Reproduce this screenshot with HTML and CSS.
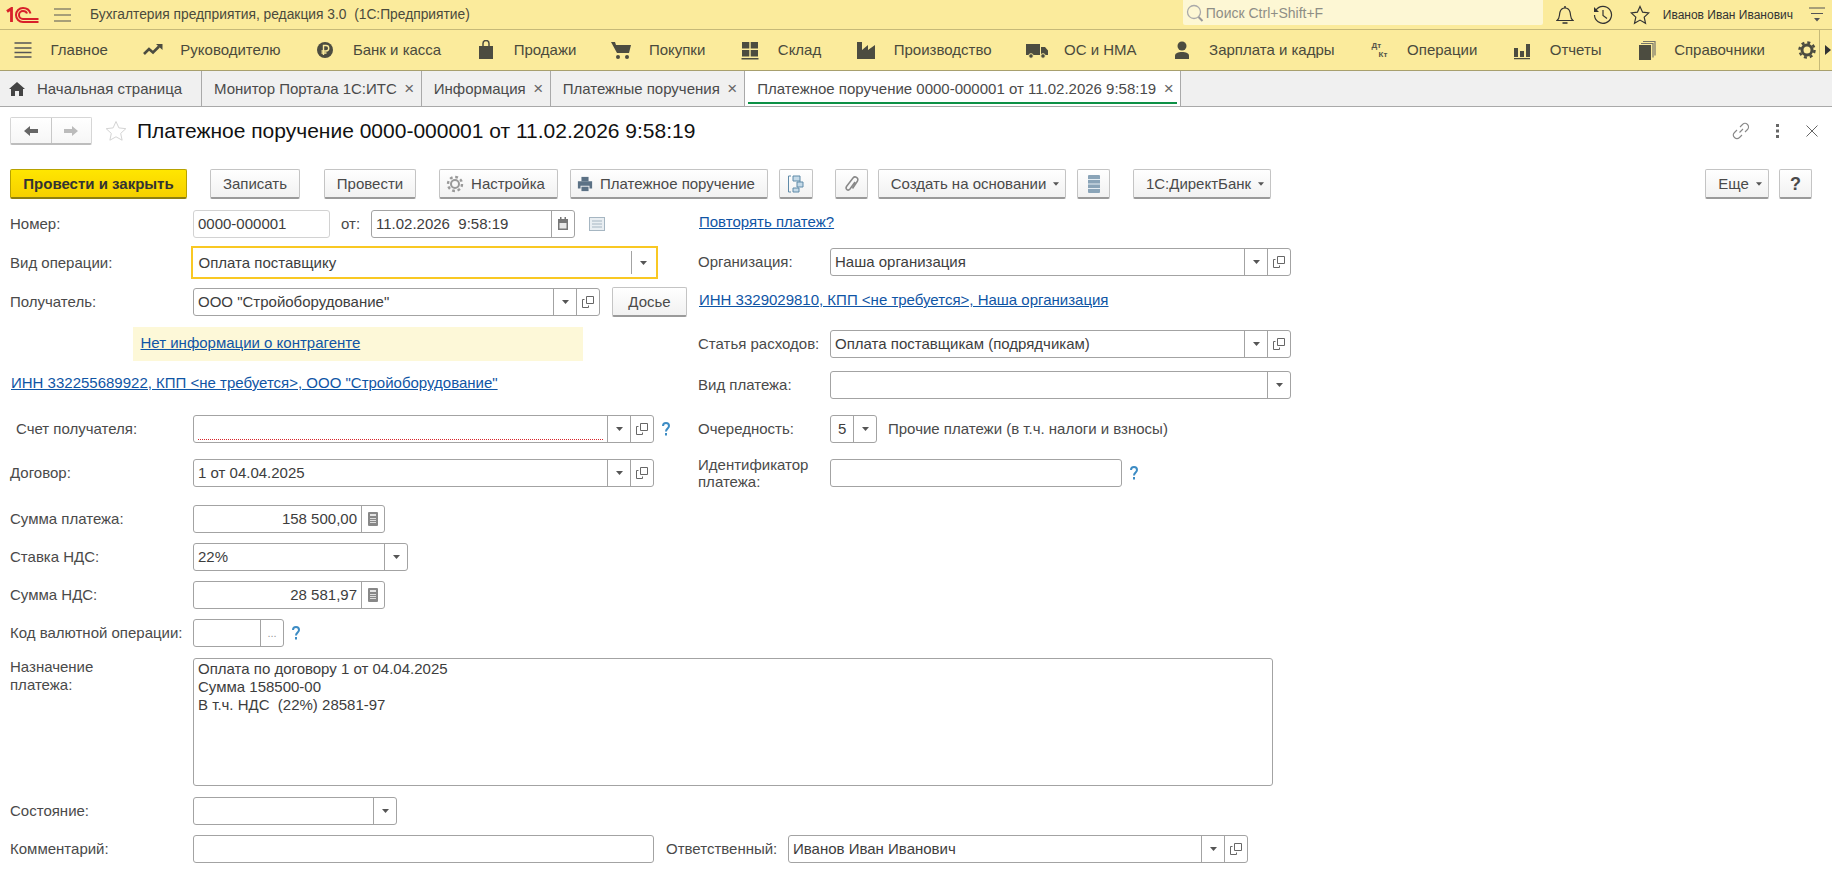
FILE: index.html
```html
<!DOCTYPE html>
<html lang="ru">
<head>
<meta charset="utf-8">
<title>Платежное поручение</title>
<link rel="stylesheet" href="styles.css">
</head>
<body>

<svg class="defs" xmlns="http://www.w3.org/2000/svg">
  <symbol id="i-caret" viewBox="0 0 7 4"><path d="M0 0h7L3.500 4z" fill="#555"/></symbol>
  <symbol id="i-copy" viewBox="0 0 12 12"><path d="M4.500.5h7v7h-7zM2.500 3.500h-2v8h6v-2" fill="none" stroke="#666"/></symbol>
  <symbol id="i-calc" viewBox="0 0 10 14"><rect width="10" height="14" rx="1" fill="#888"/><rect x="2" y="2" width="6" height="2" fill="#e4e4e4"/><path d="M2 6h6v1H2zM2 8h6v1H2zM2 10h6v1H2z" fill="#ddd"/></symbol>
  <symbol id="i-help" viewBox="0 0 8 14"><path d="M1 4c0-4 6-4 6 0 0 2.500-3 2.500-3 5.500" fill="none" stroke="#3d8cc4" stroke-width="2"/><rect x="3" y="11" width="2" height="2.500" fill="#3d8cc4"/></symbol>
</svg>

<div class="topbar">
  <svg class="logo" viewBox="0 0 33 16" width="33" height="16">
    <path d="M1 4.500L5.500 1.500V15" fill="none" stroke="#d8202a" stroke-width="2.800"/>
    <path d="M21 6.500c-.5-1.500-2-2.500-4-2.500a4 4 0 0 0 0 8h15.500" fill="none" stroke="#d8202a" stroke-width="2"/>
    <path d="M24.500 6.500C23.500 3 20.500 1 17 1a7 7 0 0 0 0 14h15.500" fill="none" stroke="#d8202a" stroke-width="2"/>
  </svg>
  <svg class="top-burger" viewBox="0 0 17 14" width="17" height="14"><path d="M0 1h17M0 7h17M0 13h17" stroke="#555" stroke-width="1.200"/></svg>
  <span class="app-title">Бухгалтерия предприятия, редакция 3.0&nbsp; (1С:Предприятие)</span>
  <div class="search">
    <svg viewBox="0 0 18 18" width="18" height="18"><circle cx="8" cy="8" r="6.500" fill="none" stroke="#aaa" stroke-width="1.300"/><path d="M12.500 13l4 4" stroke="#999" stroke-width="2"/></svg>
    <span>Поиск Ctrl+Shift+F</span>
  </div>
  <svg class="top-icon bell" viewBox="0 0 18 20" width="18" height="20"><path d="M1 15.500h16c-3-2-2-5-3-8.500-.7-2.500-2.500-4-5-4S4.700 4.500 4 7c-1 3.500 0 6.500-3 8.500z" fill="none" stroke="#333" stroke-width="1.200"/><path d="M9 1v2M6.500 18h5" stroke="#333" stroke-width="1.500"/></svg>
  <svg class="top-icon history" viewBox="0 0 20 20" width="20" height="20"><path d="M3 5a8.500 8.500 0 1 1-1.500 5" fill="none" stroke="#333" stroke-width="1.200"/><path d="M1 2v5h5z" fill="#333"/><path d="M10 5v5.500l4 3" fill="none" stroke="#333" stroke-width="1.200"/></svg>
  <svg class="top-icon star-top" viewBox="0 0 20 20" width="20" height="20"><path d="M10 1.500l2.600 5.700 6.200.7-4.600 4.200 1.300 6.100-5.500-3.100-5.500 3.100 1.300-6.100L1.200 7.900l6.200-.7z" fill="none" stroke="#333" stroke-width="1.200"/></svg>
  <span class="user">Иванов Иван Иванович</span>
  <svg class="top-menu" viewBox="0 0 16 15" width="16" height="15"><path d="M0 1h16M2 6.500h12" stroke="#555" stroke-width="1.200"/><path d="M5 11h6l-3 3.500z" fill="#555"/></svg>
</div>

<div class="sections">
  <a class="sec"><svg viewBox="0 0 24 20" width="24" height="20"><path d="M3.500 3h17M3.500 8h17M3.500 12.500h17M3.500 17h17" stroke="#555" stroke-width="1.300"/></svg><span>Главное</span></a>
  <a class="sec"><svg viewBox="0 0 24 20" width="24" height="20"><path d="M3 14l5-5 4 3.500 6-6" fill="none" stroke="#4c4c40" stroke-width="2.600"/><path d="M15 4h6.500v6z" fill="#4c4c40"/></svg><span>Руководителю</span></a>
  <a class="sec"><svg viewBox="0 0 24 20" width="24" height="20"><circle cx="12" cy="10" r="8" fill="#4c4c40"/><path d="M10.500 15V5.500h2.500a2.600 2.600 0 0 1 0 5.500H8.500M8.500 13h5" fill="none" stroke="#fbeb9c" stroke-width="1.400"/></svg><span>Банк и касса</span></a>
  <a class="sec"><svg viewBox="0 0 24 20" width="24" height="20"><path d="M5 6h14v13H5z" fill="#4c4c40"/><path d="M9 8V3.500a3 3 0 0 1 6 0V8" fill="none" stroke="#4c4c40" stroke-width="1.500"/></svg><span>Продажи</span></a>
  <a class="sec"><svg viewBox="0 0 24 20" width="24" height="20"><path d="M2 2h4l1 3h15l-2 8H8z" fill="#4c4c40"/><circle cx="9" cy="17" r="2" fill="#4c4c40"/><circle cx="18" cy="17" r="2" fill="#4c4c40"/></svg><span>Покупки</span></a>
  <a class="sec"><svg viewBox="0 0 24 20" width="24" height="20"><path d="M4 2h7.300v6.500H4zM12.700 2H20v6.500h-7.300zM4 10h7.300v6.500H4zM12.700 10H20v6.500h-7.300zM3.500 18H20.500v1.500H3.500z" fill="#4c4c40"/></svg><span>Склад</span></a>
  <a class="sec"><svg viewBox="0 0 24 20" width="24" height="20"><path d="M3 19V2h5v8l6-5v5l7-5v14z" fill="#4c4c40"/></svg><span>Производство</span></a>
  <a class="sec"><svg viewBox="0 0 24 20" width="24" height="20"><path d="M1 4h14v11H1zM16 7h4l3 3.500V15h-7z" fill="#4c4c40"/><circle cx="6" cy="16" r="2.300" fill="#4c4c40" stroke="#fbeb9c"/><circle cx="18" cy="16" r="2.300" fill="#4c4c40" stroke="#fbeb9c"/></svg><span>ОС и НМА</span></a>
  <a class="sec"><svg viewBox="0 0 24 20" width="24" height="20"><circle cx="12" cy="6" r="4.500" fill="#4c4c40"/><path d="M5 19v-3c0-3 3-4 7-4s7 1 7 4v3z" fill="#4c4c40"/></svg><span>Зарплата и кадры</span></a>
  <a class="sec"><span class="dtkt"><b>Дт</b><b>Кт</b></span><span>Операции</span></a>
  <a class="sec"><svg viewBox="0 0 24 20" width="24" height="20"><path d="M4 8h4v9H4zM10 11h4v6h-4zM16 4h4v13h-4zM4 18h16v1.200H4z" fill="#4c4c40"/></svg><span>Отчеты</span></a>
  <a class="sec"><svg viewBox="0 0 24 20" width="24" height="20"><path d="M4 5h12v15H4z" fill="#4c4c40"/><path d="M6 3.500h12v14M8 1.500h12v14" fill="none" stroke="#77766a" stroke-width="1.200"/></svg><span>Справочники</span></a>
  <svg class="sec-gear" viewBox="0 0 18 18" width="18" height="18"><circle cx="9" cy="9" r="5" fill="none" stroke="#4c4c40" stroke-width="3"/><circle cx="9" cy="9" r="7.500" fill="none" stroke="#4c4c40" stroke-width="2.500" stroke-dasharray="3 2.900"/></svg>
  <div class="sec-more"><svg viewBox="0 0 6 10" width="6" height="10"><path d="M0 0l6 5-6 5z" fill="#333"/></svg></div>
</div>

<div class="tabs">
  <div class="tab tab-home">
    <svg viewBox="0 0 16 14" width="16" height="14"><path d="M8 0l8 7h-2v7h-4V9H6v5H2V7H0z" fill="#444"/></svg>
    <span>Начальная страница</span>
  </div>
  <div class="tab"><span>Монитор Портала 1С:ИТС</span><i class="tab-x">×</i></div>
  <div class="tab"><span>Информация</span><i class="tab-x">×</i></div>
  <div class="tab"><span>Платежные поручения</span><i class="tab-x">×</i></div>
  <div class="tab tab-active"><span>Платежное поручение 0000-000001 от 11.02.2026 9:58:19</span><i class="tab-x">×</i></div>
</div>

<div class="head">
  <div class="nav">
    <div class="nav-btn"><svg viewBox="0 0 14 10" width="14" height="10"><path d="M0 5l6-5v3h8v4H6v3z" fill="#666"/></svg></div>
    <div class="nav-btn"><svg viewBox="0 0 14 10" width="14" height="10"><path d="M14 5L8 0v3H0v4h8v3z" fill="#bbb"/></svg></div>
  </div>
  <svg class="head-star" viewBox="0 0 22 22" width="22" height="22"><path d="M11 1.500l2.900 6.400 6.900.8-5.100 4.700 1.400 6.800-6.100-3.400-6.100 3.400 1.400-6.800L1.200 8.700l6.900-.8z" fill="none" stroke="#d4d4d4"/></svg>
  <h1>Платежное поручение 0000-000001 от 11.02.2026 9:58:19</h1>
  <div class="head-tools">
    <svg viewBox="0 0 18 18" width="18" height="18"><path d="M7.500 10.500l3.500-3.500M8 5l2.500-2.500a3.300 3.300 0 0 1 5 5L13 10M10 13l-2.500 2.500a3.300 3.300 0 0 1-5-5L5 8" fill="none" stroke="#888" stroke-width="1.100"/></svg>
    <svg viewBox="0 0 4 14" width="4" height="14"><path d="M0 0h3v3H0zM0 5.500h3v3H0zM0 11h3v3H0z" fill="#666"/></svg>
    <svg viewBox="0 0 12 12" width="12" height="12"><path d="M.5.500l11 11M11.500.500l-11 11" stroke="#666"/></svg>
  </div>
</div>

<div class="toolbar">
  <button class="btn btn-primary w177">Провести и закрыть</button>
  <button class="btn w90 ml23">Записать</button>
  <button class="btn w92 ml24">Провести</button>
  <button class="btn btn-lead w119 ml23"><svg class="btn-ico" viewBox="0 0 18 18" width="18" height="18"><circle cx="9" cy="9" r="4" fill="none" stroke="#999" stroke-width="2"/><circle cx="9" cy="9" r="7" fill="none" stroke="#999" stroke-width="2.400" stroke-dasharray="2.800 2.700"/></svg>Настройка</button>
  <button class="btn btn-lead w198 ml12"><svg class="btn-ico" viewBox="0 0 18 18" width="16" height="16"><path d="M5 1h8v5H5z" fill="#5b7185"/><path d="M1 6h16v8h-3v-3H4v3H1z" fill="#5b7185"/><path d="M5 12h8v5H5z" fill="#5b7185"/></svg>Платежное поручение</button>
  <button class="btn w34 ml11"><svg viewBox="0 0 18 20" width="18" height="20"><path d="M6 2h7v5H6zM10 8h6v5h-6zM6 14h6v4H6z" fill="#c5dae8" stroke="#5f8aa8"/><path d="M4 2H1.500v16H4M13 7v1" fill="none" stroke="#5f8aa8"/></svg></button>
  <button class="btn w33 ml22"><svg viewBox="0 0 16 18" width="16" height="18"><path d="M11 7l-5 7c-2 2.500-5 0-3.500-2.500L9 3c2-2.500 6 0 4.500 3l-5 7.500" fill="none" stroke="#888" stroke-width="1.500"/></svg></button>
  <button class="btn btn-drop w188 ml10">Создать на основании<svg class="btn-caret"><use href="#i-caret"/></svg></button>
  <button class="btn w33 ml11"><svg viewBox="0 0 14 18" width="14" height="18"><rect width="12" height="18" x="1" rx="1" fill="#8aa4b8"/><path d="M1 4.500h12M1 9h12M1 13.500h12" stroke="#e4edf3"/></svg></button>
  <button class="btn btn-drop w138 ml23">1С:ДиректБанк<svg class="btn-caret"><use href="#i-caret"/></svg></button>
  <button class="btn btn-drop w64 push">Еще<svg class="btn-caret"><use href="#i-caret"/></svg></button>
  <button class="btn btn-help w33 ml10">?</button>
</div>

<div class="form">
  <div class="columns">
    <div class="col-left">
      <div class="row">
        <label>Номер:</label>
        <div class="field field-light w137"><div class="val">0000-000001</div></div>
        <label class="lbl-from">от:</label>
        <div class="field w204"><div class="val">11.02.2026&nbsp; 9:58:19</div>
          <div class="fbtn"><svg viewBox="0 0 12 14" width="12" height="14"><path d="M1 2h10v11H1z" fill="#777"/><path d="M3 0h1.500v3H3zM7.500 0H9v3H7.500z" fill="#777"/><path d="M2.500 6h7v5.500h-7z" fill="#e8e8e8"/></svg></div>
        </div>
        <svg class="doc-ico" viewBox="0 0 16 14" width="16" height="14"><rect x=".5" y=".5" width="15" height="13" fill="#e9eef2" stroke="#a6b6c2"/><path d="M3 4h10M3 7h10M3 10h10" stroke="#a6b6c2"/></svg>
      </div>
      <div class="row row-focus mt8">
        <label class="lbl-focus">Вид операции:</label>
        <div class="field field-focus"><div class="val">Оплата поставщику</div><div class="fbtn"><svg class="caret"><use href="#i-caret"/></svg></div></div>
      </div>
      <div class="row mt9">
        <label>Получатель:</label>
        <div class="field w407"><div class="val">ООО "Стройоборудование"</div><div class="fbtn"><svg class="caret"><use href="#i-caret"/></svg></div><div class="fbtn"><svg class="copy"><use href="#i-copy"/></svg></div></div>
        <button class="btn btn-dossier">Досье</button>
      </div>
      <div class="note"><a>Нет информации о контрагенте</a></div>
      <div class="link-row mt13"><a class="inn">ИНН 332255689922, КПП &lt;не требуется&gt;, ООО "Стройоборудование"</a></div>
      <div class="row mt23">
        <label class="lbl-indent">Счет получателя:</label>
        <div class="field w461"><div class="val val-error"></div><div class="fbtn"><svg class="caret"><use href="#i-caret"/></svg></div><div class="fbtn"><svg class="copy"><use href="#i-copy"/></svg></div></div>
        <svg class="help"><use href="#i-help"/></svg>
      </div>
      <div class="row mt16">
        <label>Договор:</label>
        <div class="field w461"><div class="val">1 от 04.04.2025</div><div class="fbtn"><svg class="caret"><use href="#i-caret"/></svg></div><div class="fbtn"><svg class="copy"><use href="#i-copy"/></svg></div></div>
      </div>
    </div>

    <div class="col-right">
      <div class="link-row"><a>Повторять платеж?</a></div>
      <div class="row mt17">
        <label class="lbl-r">Организация:</label>
        <div class="field w461"><div class="val">Наша организация</div><div class="fbtn"><svg class="caret"><use href="#i-caret"/></svg></div><div class="fbtn"><svg class="copy"><use href="#i-copy"/></svg></div></div>
      </div>
      <div class="link-row mt15"><a>ИНН 3329029810, КПП &lt;не требуется&gt;, Наша организация</a></div>
      <div class="row mt21">
        <label class="lbl-r">Статья расходов:</label>
        <div class="field w461"><div class="val">Оплата поставщикам (подрядчикам)</div><div class="fbtn"><svg class="caret"><use href="#i-caret"/></svg></div><div class="fbtn"><svg class="copy"><use href="#i-copy"/></svg></div></div>
      </div>
      <div class="row mt13">
        <label class="lbl-r">Вид платежа:</label>
        <div class="field w461"><div class="val"></div><div class="fbtn"><svg class="caret"><use href="#i-caret"/></svg></div></div>
      </div>
      <div class="row mt16">
        <label class="lbl-r">Очередность:</label>
        <div class="field w47"><div class="val val-one">5</div><div class="fbtn"><svg class="caret"><use href="#i-caret"/></svg></div></div>
        <span class="hint">Прочие платежи (в т.ч. налоги и взносы)</span>
      </div>
      <div class="row mt16">
        <label class="lbl-r lbl-two">Идентификатор<br>платежа:</label>
        <div class="field w292"><div class="val"></div></div>
        <svg class="help help-id"><use href="#i-help"/></svg>
      </div>
    </div>
  </div>

  <div class="row mt18">
    <label>Сумма платежа:</label>
    <div class="field w192"><div class="val val-num">158 500,00</div><div class="fbtn"><svg class="calc"><use href="#i-calc"/></svg></div></div>
  </div>
  <div class="row mt10">
    <label>Ставка НДС:</label>
    <div class="field w215"><div class="val">22%</div><div class="fbtn"><svg class="caret"><use href="#i-caret"/></svg></div></div>
  </div>
  <div class="row mt10">
    <label>Сумма НДС:</label>
    <div class="field w192"><div class="val val-num">28 581,97</div><div class="fbtn"><svg class="calc"><use href="#i-calc"/></svg></div></div>
  </div>
  <div class="row mt10">
    <label>Код валютной операции:</label>
    <div class="field w91"><div class="val"></div><div class="fbtn fbtn-dots">...</div></div>
    <svg class="help"><use href="#i-help"/></svg>
  </div>
  <div class="row row-text mt11">
    <label>Назначение<br>платежа:</label>
    <div class="textarea">Оплата по договору 1 от 04.04.2025<br>Сумма 158500-00<br>В т.ч. НДС&nbsp; (22%) 28581-97</div>
  </div>
  <div class="row mt11">
    <label>Состояние:</label>
    <div class="field w204"><div class="val"></div><div class="fbtn"><svg class="caret"><use href="#i-caret"/></svg></div></div>
  </div>
  <div class="row mt10">
    <label>Комментарий:</label>
    <div class="field w461"><div class="val"></div></div>
    <label class="lbl-resp">Ответственный:</label>
    <div class="field w460"><div class="val">Иванов Иван Иванович</div><div class="fbtn"><svg class="caret"><use href="#i-caret"/></svg></div><div class="fbtn"><svg class="copy"><use href="#i-copy"/></svg></div></div>
  </div>
</div>

</body>
</html>
```

FILE: styles.css
```css
*{
	margin:0;
	padding:0;
	box-sizing:border-box;
}
html,body{
	height:880px;
	overflow:hidden;
}
body{
	background:#fff;
	color:#4a4a4a;
	font:15px/18px "Liberation Sans",Arial,sans-serif;
}
.defs{
	display:none;
}
a{
	color:#0f55a5;
	text-decoration:underline;
}

/* top bar */
.topbar{
	display:flex;
	align-items:center;
	height:30px;
	padding-left:6px;
	background:#fbeb9c;
	border-bottom:1px solid #c6b978;
}
.logo{
	flex:none;
}
.top-burger{
	margin-left:15px;
}
.app-title{
	margin-left:19px;
	font-size:13.800px;
	color:#4a4a3c;
}
.search{
	display:flex;
	align-items:center;
	align-self:flex-start;
	width:360px;
	height:25px;
	margin-left:auto;
	padding-left:3px;
	background:#fdf7d4;
	border-radius:0 0 2px 2px;
	font-size:14px;
	color:#8e8e86;
}
.search span{
	margin-left:2px;
}
.top-icon{
	flex:none;
}
.bell{
	margin-left:13px;
}
.history{
	margin-left:19px;
}
.star-top{
	margin-left:17px;
}
.user{
	margin-left:13px;
	font-size:12px;
	color:#333;
}
.top-menu{
	margin:0 7px 0 16px;
}

/* sections */
.sections{
	display:flex;
	align-items:center;
	height:41px;
	padding-left:11px;
	background:#fbeb9c;
	border-bottom:1px solid #a8a06e;
}
.sec{
	display:flex;
	flex:none;
	align-items:center;
	margin-right:33px;
	color:#4a4a3c;
	text-decoration:none;
	white-space:nowrap;
}
.sec span:last-child{
	margin-left:15.500px;
}
.dtkt{
	display:flex;
	flex-direction:column;
	width:24px;
	font-size:8px;
	line-height:9px;
	color:#55554a;
	padding-left:4px;
}
.dtkt b+b{
	margin-left:7px;
}
.sec-gear{
	margin-left:auto;
	flex:none;
}
.sec-more{
	display:flex;
	align-items:center;
	align-self:stretch;
	width:16px;
	margin-left:3px;
	padding-left:5px;
	border-left:1px solid #c6b978;
}

/* tabs */
.tabs{
	display:flex;
	height:36px;
	background:#f0f0f0;
	border-bottom:1px solid #a9a9a9;
}
.tab{
	display:flex;
	align-items:center;
	height:35px;
	padding:0 5px 0 12px;
	border-right:1px solid #a9a9a9;
	color:#4a4a4a;
}
.tab-home{
	width:202px;
	padding-left:9px;
}
.tab-home span{
	margin-left:12px;
}
.tab-x{
	margin-left:6px;
	width:13px;
	font:17px/18px "Liberation Sans",sans-serif;
	font-style:normal;
	color:#666;
	text-align:center;
}
.tab-active{
	position:relative;
	padding-left:12.500px;
	background:#fff;
}
.tab-active:after{
	content:"";
	position:absolute;
	left:3px;
	right:3px;
	bottom:2px;
	height:2px;
	background:#0d9146;
}

/* header */
.head{
	display:flex;
	align-items:center;
	height:48px;
	padding:0 14px 0 10px;
	margin-top:0;
}
.nav{
	display:flex;
	width:82px;
	height:28px;
	border:1px solid #d6d6d6;
	border-bottom:2px solid #bdbdbd;
	border-radius:2px;
}
.nav-btn{
	display:flex;
	flex:1;
	align-items:center;
	justify-content:center;
	background:linear-gradient(#fff,#f6f6f6);
}
.nav-btn+.nav-btn{
	border-left:1px solid #c8c8c8;
}
.head-star{
	margin-left:13px;
}
h1{
	margin-left:10px;
	font-size:21px;
	font-weight:normal;
	line-height:24px;
	color:#111;
}
.head-tools{
	display:flex;
	align-items:center;
	gap:26px;
	margin-left:auto;
}

/* toolbar */
.toolbar{
	display:flex;
	height:30px;
	margin-top:14px;
	padding:0 20px 0 10px;
}
.btn{
	display:flex;
	align-items:center;
	justify-content:center;
	flex:none;
	height:30px;
	background:linear-gradient(#fff,#f1f1f1);
	border:1px solid #c4c4c4;
	border-bottom:2px solid #9a9a9a;
	border-radius:2px;
	font:15px/18px "Liberation Sans",Arial,sans-serif;
	color:#4a4a4a;
}
.btn-primary{
	background:linear-gradient(#ffe600,#f6d000);
	border-color:#b8a200;
	border-bottom-color:#8e7f10;
	font-weight:bold;
	color:#333;
}
.btn-help{
	font-size:18px;
	font-weight:bold;
}
.btn-lead{
	padding-right:6px;
}
.btn-drop{
	padding-left:6px;
}
.btn-ico{
	margin-right:7px;
}
.btn-caret{
	width:6px;
	height:4px;
	margin-left:7px;
}
.btn-dossier{
	width:75px;
	margin-left:12px;
}
.push{
	margin-left:auto;
}
.w33{width:33px}
.w34{width:34px}
.w64{width:64px}
.w90{width:90px}
.w92{width:92px}
.w119{width:119px}
.w138{width:138px}
.w177{width:177px}
.w188{width:188px}
.w198{width:198px}
.ml10{margin-left:10px}
.ml11{margin-left:11px}
.ml12{margin-left:12px}
.ml22{margin-left:22px}
.ml23{margin-left:23px}
.ml24{margin-left:24px}

/* form */
.form{
	padding:11px 0 0 10px;
}
.columns{
	display:flex;
}
.col-left{
	width:688px;
	flex:none;
}
.col-right{
	padding-top:3px;
}
.col-right .link-row{
	padding-left:1px;
}
.row{
	display:flex;
	align-items:center;
	height:28px;
}
.row label{
	flex:none;
	width:183px;
}
.mt8{margin-top:8px}
.mt9{margin-top:9px}
.mt10{margin-top:10px}
.mt11{margin-top:11px}
.mt13{margin-top:13px}
.mt15{margin-top:15px}
.mt16{margin-top:16px}
.mt17{margin-top:17px}
.mt18{margin-top:18px}
.mt21{margin-top:21px}
.mt23{margin-top:23px}
.row label.lbl-from{
	width:30px;
	margin-left:11px;
}
.row label.lbl-focus{
	width:180.500px;
}
.row-focus{
	height:33px;
}
.row label.lbl-indent{
	padding-left:6px;
}
.row label.lbl-r{
	width:132px;
}
.row label.lbl-two{
	line-height:17px;
}
.row label.lbl-resp{
	width:122px;
	margin-left:12px;
}
.field{
	display:flex;
	flex:none;
	height:28px;
	background:#fff;
	border:1px solid #a3a3a3;
	border-radius:3px;
}
.field-light{
	border-color:#d2d2d2;
}
.field-focus{
	width:467px;
	height:33px;
	border:2px solid #f9c823;
	border-radius:0;
}
.field-focus .val{
	padding-left:6px;
	line-height:30px;
}
.field-focus .fbtn{
	height:23px;
	margin-top:3px;
	width:25px;
}
.w47{width:47px}
.w91{width:91px}
.w137{width:137px}
.w192{width:192px}
.w204{width:204px}
.w215{width:215px}
.w292{width:292px}
.w407{width:407px}
.w460{width:460px}
.w461{width:461px}
.val{
	flex:1;
	min-width:0;
	padding-left:4px;
	line-height:26px;
	color:#3d3d3d;
	white-space:nowrap;
}
.val-num{
	padding:0 4px 0 0;
	text-align:right;
}
.val-one{
	padding-left:7px;
}
.val-error{
	margin:0 4px 0 4px;
	height:24px;
	border-bottom:1px dotted #d8232a;
}
.fbtn{
	display:flex;
	flex:none;
	align-items:center;
	justify-content:center;
	width:23px;
	border-left:1px solid #a3a3a3;
}
.fbtn-dots{
	color:#999;
	font-size:11px;
}
.caret{
	width:7px;
	height:4px;
}
.copy{
	width:12px;
	height:12px;
}
.calc{
	width:10px;
	height:14px;
}
.help{
	width:8px;
	height:14px;
	margin-left:8px;
}
.doc-ico{
	margin-left:14px;
}
.note{
	width:450px;
	height:34px;
	margin:11px 0 0 122.500px;
	padding-left:8px;
	background:#fdf8d8;
	line-height:32px;
}
.link-row{
	height:18px;
}
.inn{
	margin-left:1px;
}
.hint{
	margin-left:11px;
}
.row-text{
	align-items:flex-start;
	height:128px;
}
.textarea{
	width:1080px;
	height:128px;
	padding:1px 4px;
	background:#fff;
	border:1px solid #a3a3a3;
	border-radius:3px;
	color:#3d3d3d;
}
```
